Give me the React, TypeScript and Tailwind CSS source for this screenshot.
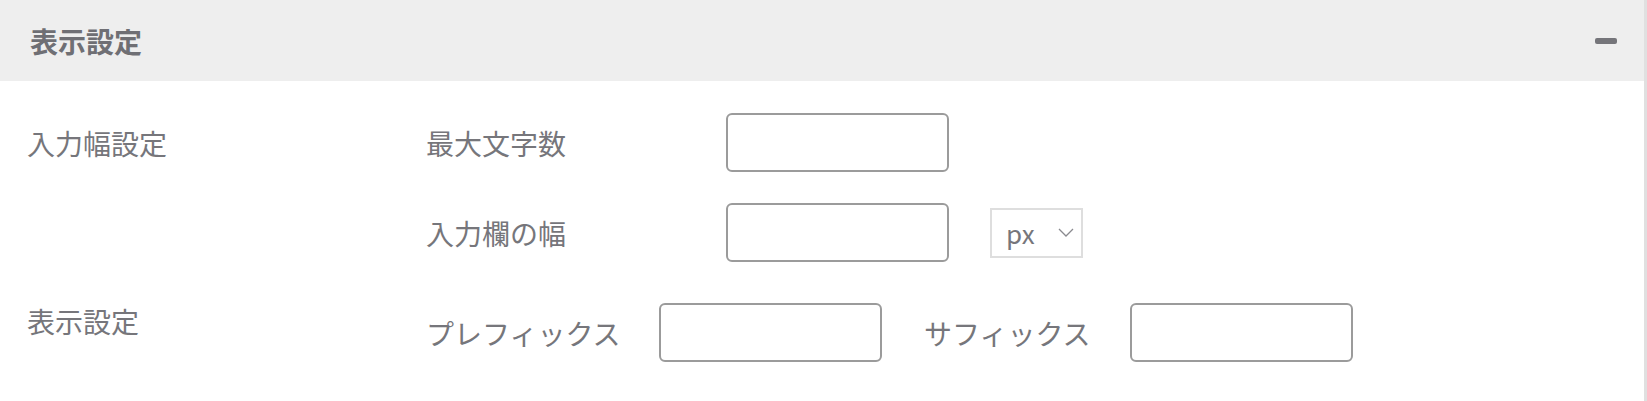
export default function App() {
  const font = { fontFamily: '"Noto Sans CJK JP", "Noto Sans", sans-serif' };
  const input = "w-[223px] h-[59px] rounded-[6px] border-2 border-[#9b9b9b] bg-white";

  return (
    <main
      className="h-[401px] w-full bg-white border-r-[3px] border-[#e0e0e0] text-[#76767b]"
      style={font}
    >
      <header className="flex h-[81px] items-center justify-between bg-[#eeeeee] pl-[30px] pr-[27px]">
        <h2 className="text-[28px] font-bold leading-none text-[#6f6f74]">表示設定</h2>
        <button className="flex h-[22px] w-[22px] items-center">
          <span className="block h-[6px] w-[22px] rounded-[2px] bg-[#75757a]"></span>
        </button>
      </header>

      <div className="px-[27px] pt-[32px]">
        <div className="flex">
          <div className="flex h-[59px] w-[399px] items-center text-[28px] leading-none">
            入力幅設定
          </div>
          <div className="flex flex-col gap-[31px]">
            <div className="flex items-center">
              <label className="w-[300px] text-[28px] leading-none">最大文字数</label>
              <input className={input} />
            </div>
            <div className="flex items-center">
              <label className="w-[300px] text-[28px] leading-none">入力欄の幅</label>
              <input className={input} />
              <div className="ml-[41px] flex h-[50px] w-[93px] items-center justify-between border-2 border-[#dedede] pl-[14px] pr-[7px]">
                <span className="text-[26px] leading-none">px</span>
                <svg width="16" height="9" viewBox="0 0 16 9" fill="none">
                  <path d="M1 1l7 7 7-7" stroke="#8a8a8f" strokeWidth="1.3" />
                </svg>
              </div>
            </div>
          </div>
        </div>

        <div className="mt-[41px] flex items-center">
          <div className="w-[399px] pb-[24px] text-[28px] leading-none">表示設定</div>
          <label className="w-[233px] text-[28px] leading-none">プレフィックス</label>
          <input className={input} />
          <label className="ml-[42px] w-[206px] text-[28px] leading-none">サフィックス</label>
          <input className={input} />
        </div>
      </div>
    </main>
  );
}
